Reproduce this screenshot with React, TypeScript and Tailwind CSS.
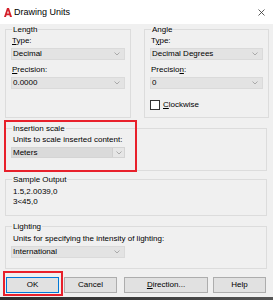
import type { ReactNode } from "react";

const font = { fontFamily: '"Liberation Sans", Arial, sans-serif' };

const Chevron = () => (
  <svg width="6" height="4" viewBox="0 0 6 4" className="shrink-0">
    <polyline points="0.5,0.5 3,3 5.5,0.5" fill="none" stroke="#9a9a9a" strokeWidth="0.8" />
  </svg>
);

// Combo box fechado, estilo Windows 10
const Combo = ({ value, width, active = false }: { value: string; width: string; active?: boolean }) => {
  if (active) {
    return (
      <div className={`flex h-[11px] ${width} border border-[#d4d4d4] bg-[#dadada]`}>
        <span className="flex-1 pl-[1px] text-[8px] leading-[9px] text-black">{value}</span>
        <span className="flex w-[12px] items-center justify-center border-l border-[#cfcfcf] bg-[#e6e6e6]">
          <Chevron />
        </span>
      </div>
    );
  }
  return (
    <div className={`flex h-[12px] ${width} items-center border border-[#dadada] bg-[#e3e3e3] pr-[4px]`}>
      <span className="flex-1 pl-[1px] text-[8px] leading-[10px] text-black">{value}</span>
      <Chevron />
    </div>
  );
};

const Group = ({ title, className, children }: { title: string; className: string; children: ReactNode }) => (
  <fieldset className={`border border-[#dcdcdc] px-[5px] ${className}`}>
    <legend className="ml-[1px] px-[1px] text-[8px] leading-[9px] text-black">{title}</legend>
    {children}
  </fieldset>
);

const Label = ({ children, className = "" }: { children: ReactNode; className?: string }) => (
  <div className={`pl-[1px] text-[8px] leading-[10px] text-black ${className}`}>{children}</div>
);

const Button = ({ children, width, focused = false }: { children: ReactNode; width: string; focused?: boolean }) => (
  <div
    className={`flex h-[16px] ${width} items-center justify-center border bg-[#e1e1e1] text-[8px] text-black ${
      focused ? "border-[#0078d7]" : "border-[#adadad]"
    }`}
  >
    {children}
  </div>
);

export default function App() {
  return (
    <div className="relative flex h-[300px] w-[273px] flex-col overflow-hidden" style={font}>
      {/* barra de título */}
      <div className="flex h-[24px] shrink-0 items-center bg-white pl-[4px] pr-[8px]">
        <svg width="8" height="9" viewBox="0 0 8 9">
          <path
            d="M0 9 L3 0 L5 0 L8 9 L6 9 L5.4 7.2 L2.6 7.2 L2 9 Z M3.1 5.5 L4.9 5.5 L4 2.6 Z"
            fill="#d4202a"
            fillRule="evenodd"
          />
        </svg>
        <span className="ml-[2px] text-[9px] leading-[10px] text-black">Drawing Units</span>
        <svg width="7" height="7" viewBox="0 0 7 7" className="ml-auto">
          <path d="M0.5 0.5 L6.5 6.5 M6.5 0.5 L0.5 6.5" stroke="#333" strokeWidth="0.8" />
        </svg>
      </div>

      <div className="flex flex-1 flex-col bg-[#f0f0f0] px-[5px] pt-[1px]">
        {/* Length / Angle */}
        <div className="flex gap-[13px]">
          <Group title="Length" className="h-[93px] w-[126px]">
            <Label className="mt-[2px]">
              <u>T</u>ype:
            </Label>
            <div className="mt-[2px]">
              <Combo value="Decimal" width="w-[114px]" />
            </div>
            <Label className="mt-[5px]">
              <u>P</u>recision:
            </Label>
            <div className="mt-[2px]">
              <Combo value="0.0000" width="w-[114px]" />
            </div>
          </Group>
          <Group title="Angle" className="h-[93px] w-[126px]">
            <Label className="mt-[2px]">
              T<u>y</u>pe:
            </Label>
            <div className="mt-[2px]">
              <Combo value="Decimal Degrees" width="w-[113px]" />
            </div>
            <Label className="mt-[5px]">
              Precisio<u>n</u>:
            </Label>
            <div className="mt-[2px]">
              <Combo value="0" width="w-[113px]" />
            </div>
            <div className="mt-[11px] flex items-center gap-[3px]">
              <span className="h-[10px] w-[10px] border border-[#333] bg-white" />
              <span className="text-[8px] leading-[10px] text-black">
                <u>C</u>lockwise
              </span>
            </div>
          </Group>
        </div>

        {/* Insertion scale */}
        <Group title="Insertion scale" className="mt-[6px] h-[47px] w-[262px]">
          <Label className="mt-[2px] pl-[2px]">Units to scale inserted content:</Label>
          <div className="mt-[2px]">
            <Combo value="Meters" width="w-[114px]" active />
          </div>
        </Group>

        {/* Sample Output */}
        <Group title="Sample Output" className="mt-[4px] h-[41px] w-[262px]">
          <Label className="mt-[3px] pl-[2px]">1.5,2.0039,0</Label>
          <Label className="pl-[2px]">3&lt;45,0</Label>
        </Group>

        {/* Lighting */}
        <Group title="Lighting" className="mt-[6px] h-[47px] w-[262px]">
          <Label className="mt-[3px] pl-[2px]">Units for specifying the intensity of lighting:</Label>
          <div className="mt-[2px]">
            <Combo value="International" width="w-[114px]" />
          </div>
        </Group>

        {/* botões */}
        <div className="mt-[8px] flex pl-[1px]">
          <Button width="w-[53px]" focused>
            OK
          </Button>
          <div className="ml-[5px]">
            <Button width="w-[53px]">Cancel</Button>
          </div>
          <div className="ml-[7px]">
            <Button width="w-[84px]">
              <span>
                <u>D</u>irection...
              </span>
            </Button>
          </div>
          <div className="ml-[5px]">
            <Button width="w-[53px]">Help</Button>
          </div>
        </div>
      </div>

      <div className="h-[3px] shrink-0 bg-gradient-to-r from-[#2e2e2e] via-[#3c3c3c] to-[#555]" />

      {/* marcações em vermelho do tutorial */}
      <div className="pointer-events-none absolute left-[4px] top-[120px] h-[52px] w-[133px] border-2 border-[#e8202b]" />
      <div className="pointer-events-none absolute left-[3px] top-[271px] h-[25px] w-[60px] border-2 border-[#e8202b]" />
    </div>
  );
}
